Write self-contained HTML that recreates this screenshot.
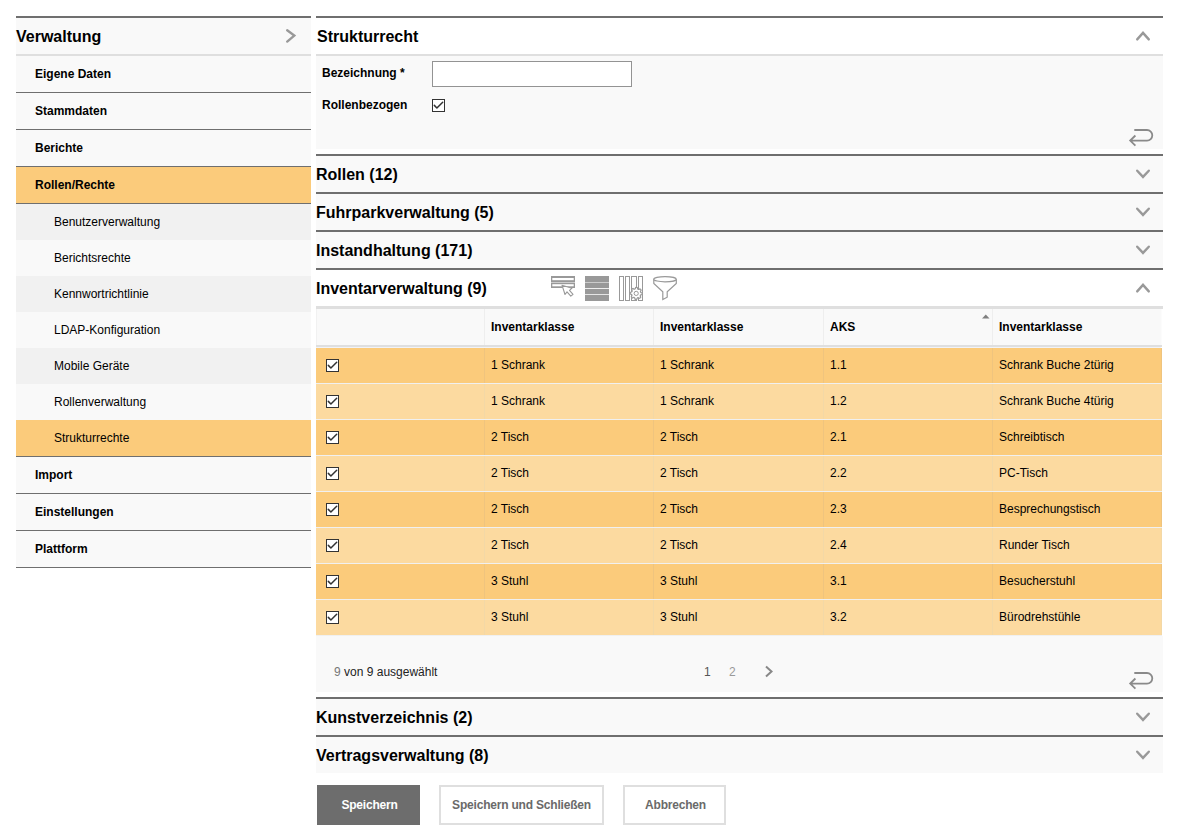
<!DOCTYPE html>
<html><head><meta charset="utf-8">
<style>
*{box-sizing:border-box;margin:0;padding:0}
html,body{width:1184px;height:839px;overflow:hidden;background:#fff;font-family:"Liberation Sans",sans-serif;color:#000}
.abs{position:absolute}
/* sidebar */
#sb{position:absolute;left:16px;top:16px;width:295px}
.sbh{height:38px;border-top:2px solid #6f6f6f;background:#f9f9f9;font-weight:bold;font-size:16px;line-height:36px;padding-top:1px;position:relative}
.sbl{height:2px;background:#dfdfdf}
.it{height:37px;background:#f9f9f9;border-bottom:1px solid #6f6f6f;font-weight:bold;font-size:12px;line-height:36px;padding-left:19px}
.it.sel{background:#fbcb7b}
.sub{height:36px;font-size:12px;line-height:36px;padding-left:38px;background:#f9f9f9}
.sub.g{background:#f1f1f1}
.sub.sel{background:#fbcb7b;border-bottom:1px solid #6f6f6f;height:37px}
/* main */
#mn{position:absolute;left:316px;top:16px;width:847px}
.ph{height:38px;border-top:2px solid #6f6f6f;background:#f9f9f9;font-weight:bold;font-size:16px;line-height:36px;padding-top:1px;position:relative}
.ph.open{background:#fff}
.chev{position:absolute;right:12px;top:0}
.lbl{position:absolute;font-weight:bold;font-size:12px}
.tr{display:flex;height:36px;border-bottom:1px solid #f0f0f0;font-size:12px}
.tr.th{height:38px;font-weight:bold;background:#f9f9f9;border-bottom:2px solid #dfdfdf}
.thsep{height:1px;background:#f1f3f8;width:845px}
.td{position:relative;line-height:35px;padding-left:6px;border-left:1px solid #eee}
.th .td{padding-top:1px}
.o1{background:#fbcb7b}.o2{background:#fcdaa0}
.o1 .td{border-left-color:#efc47e}.o2 .td{border-left-color:#f3d8a6}
.o1 .c4{border-right:1px solid #efc47e}.o2 .c4{border-right:1px solid #f3d8a6}
.th .c0{border-left:1px solid #f1f1f1}.th .c4{border-right:1px solid #fcfcfc}
.c0{width:168px;border-left:none}.c1{width:169px}.c2{width:170px}.c3{width:169px}.c4{width:170px}
.cb{position:absolute;left:10px;top:11px;line-height:0}
.btn{height:40px;border:2px solid #dfdfdf;background:#fff;color:#6a6a6a;font-weight:bold;font-size:12px;line-height:36px;text-align:center;letter-spacing:-0.2px}

</style></head><body>

<div id="sb">
  <div class="sbh">Verwaltung
    <svg class="abs" style="left:269px;top:10px" width="14" height="16" viewBox="0 0 14 16"><polyline points="2.2,2.2 9.3,7.6 2.2,13.6" fill="none" stroke="#999" stroke-width="2.4" stroke-linecap="round" stroke-linejoin="miter"/></svg>
  </div>
  <div class="sbl"></div>
  <div class="it">Eigene Daten</div>
  <div class="it">Stammdaten</div>
  <div class="it">Berichte</div>
  <div class="it sel">Rollen/Rechte</div>
  <div class="sub g">Benutzerverwaltung</div>
  <div class="sub">Berichtsrechte</div>
  <div class="sub g">Kennwortrichtlinie</div>
  <div class="sub">LDAP-Konfiguration</div>
  <div class="sub g">Mobile Geräte</div>
  <div class="sub">Rollenverwaltung</div>
  <div class="sub sel">Strukturrechte</div>
  <div class="it">Import</div>
  <div class="it">Einstellungen</div>
  <div class="it">Plattform</div>
</div>

<div id="mn">
  <!-- Strukturrecht -->
  <div class="ph open" style="padding-left:1px">Strukturrecht
    <svg class="abs" style="left:819px;top:12px" width="16" height="12" viewBox="0 0 16 12"><polyline points="2.2,9.4 8,2.9 13.8,9.4" fill="none" stroke="#999" stroke-width="2.4" stroke-linecap="round"/></svg>
  </div>
  <div style="height:2px;background:#dfdfdf"></div>
  <div style="height:93px;background:#f9f9f9;position:relative">
    <div class="lbl" style="left:6px;top:9px;line-height:16px">Bezeichnung *</div>
    <div class="abs" style="left:116px;top:5px;width:200px;height:26px;border:1px solid #939393;background:#fff"></div>
    <div class="lbl" style="left:6px;top:41px;line-height:16px">Rollenbezogen</div>
    <svg class="abs" style="left:116px;top:43px" width="13" height="13" viewBox="0 0 13 13"><rect x="0.5" y="0.5" width="12" height="12" fill="#fff" stroke="#333"/><polyline points="2.3,6.4 4.9,9 10.7,3.2" fill="none" stroke="#333" stroke-width="1.5" stroke-linecap="round" stroke-linejoin="round"/></svg>
    <svg class="abs" style="left:810px;top:70px" width="28" height="22" viewBox="0 0 28 22"><path d="M8.3,4 H21 A5.3,5.3 0 0 1 21,14.6 H4.2 M9.4,9.5 L4.2,14.6 L9.4,19.6" fill="none" stroke="#8a8a8a" stroke-width="1.8"/></svg>
  </div>
  <div style="height:5px;background:#fff"></div>

  <div class="ph">Rollen (12)
    <svg class="abs" style="left:819px;top:12px" width="16" height="12" viewBox="0 0 16 12"><polyline points="2.2,2.7 8,8.9 13.8,2.7" fill="none" stroke="#999" stroke-width="2.4" stroke-linecap="round"/></svg>
  </div>
  <div class="ph">Fuhrparkverwaltung (5)
    <svg class="abs" style="left:819px;top:12px" width="16" height="12" viewBox="0 0 16 12"><polyline points="2.2,2.7 8,8.9 13.8,2.7" fill="none" stroke="#999" stroke-width="2.4" stroke-linecap="round"/></svg>
  </div>
  <div class="ph">Instandhaltung (171)
    <svg class="abs" style="left:819px;top:12px" width="16" height="12" viewBox="0 0 16 12"><polyline points="2.2,2.7 8,8.9 13.8,2.7" fill="none" stroke="#999" stroke-width="2.4" stroke-linecap="round"/></svg>
  </div>
  <div class="ph open">Inventarverwaltung (9)
<svg class="abs" style="left:234px;top:5px" width="26" height="24" viewBox="0 0 26 24"><rect x="1" y="1" width="24" height="6" fill="#999"/><rect x="2.3" y="3" width="21.4" height="2.2" fill="#fff"/><rect x="1" y="7" width="24" height="1" fill="#ccc"/><rect x="1" y="8" width="24" height="5" fill="#999"/><rect x="2.3" y="9.2" width="21.4" height="2.1" fill="#fff"/><polygon points="12,10.2 15,19.5 17,16.8 20.8,21.2 23,19.3 19.5,15.3 22,13.2" fill="#fff" stroke="#999" stroke-width="1.1" stroke-linejoin="round"/></svg>
<svg class="abs" style="left:269px;top:6px" width="24" height="25" viewBox="0 0 24 25"><rect x="0" y="0" width="24" height="6" fill="#999"/><rect x="0" y="6" width="24" height="1" fill="#ccc"/><rect x="0" y="7" width="24" height="5" fill="#999"/><rect x="0" y="12" width="24" height="1" fill="#eee"/><rect x="0" y="13" width="24" height="5" fill="#999"/><rect x="0" y="18" width="24" height="1" fill="#e5e5e5"/><rect x="0" y="19" width="24" height="6" fill="#999"/></svg>
<svg class="abs" style="left:302px;top:5px" width="26" height="27" viewBox="0 0 26 27"><g fill="none" stroke="#999" stroke-width="1"><rect x="1.5" y="1.5" width="4" height="24"/><rect x="7.5" y="1.5" width="4" height="24"/><rect x="13.5" y="1.5" width="5" height="24"/><rect x="20.5" y="1.5" width="4" height="24"/></g><polygon points="18.20,12.40 18.79,12.43 19.35,12.61 19.62,13.71 19.96,14.15 20.37,14.34 20.92,14.33 21.94,13.84 22.44,14.16 22.84,14.59 23.11,15.12 22.52,16.09 22.45,16.64 22.60,17.06 23.01,17.44 24.07,17.82 24.20,18.40 24.17,18.99 23.99,19.55 22.89,19.82 22.45,20.16 22.26,20.57 22.27,21.12 22.76,22.14 22.44,22.64 22.01,23.04 21.48,23.31 20.51,22.72 19.96,22.65 19.54,22.80 19.16,23.21 18.78,24.27 18.20,24.40 17.61,24.37 17.05,24.19 16.78,23.09 16.44,22.65 16.03,22.46 15.48,22.47 14.46,22.96 13.96,22.64 13.56,22.21 13.29,21.68 13.88,20.71 13.95,20.16 13.80,19.74 13.39,19.36 12.33,18.98 12.20,18.40 12.23,17.81 12.41,17.25 13.51,16.98 13.95,16.64 14.14,16.23 14.13,15.68 13.64,14.66 13.96,14.16 14.39,13.76 14.92,13.49 15.89,14.08 16.44,14.15 16.86,14.00 17.24,13.59 17.62,12.53" fill="#fff" stroke="#999" stroke-width="1.2"/><circle cx="18.2" cy="18.4" r="2.1" fill="#fff" stroke="#999" stroke-width="1"/></svg>
<svg class="abs" style="left:336px;top:5px" width="26" height="27" viewBox="0 0 26 27"><g fill="#fff" stroke="#999" stroke-width="1.2"><path d="M1.8,4.2 V8.4 L10.8,16.8 V24.5 L15.2,22.2 V16.8 L24.3,8.4 V4.2"/><ellipse cx="13" cy="4.2" rx="11.3" ry="2.6"/></g></svg>
    <svg class="abs" style="left:819px;top:12px" width="16" height="12" viewBox="0 0 16 12"><polyline points="2.2,9.4 8,2.9 13.8,9.4" fill="none" stroke="#999" stroke-width="2.4" stroke-linecap="round"/></svg>
  </div>
  <div style="height:3px;background:#dfdfdf"></div>
<div id="tbl" style="position:relative;width:846px;background:#fff">
<div class="tr th">
<div class="td c0"></div><div class="td c1">Inventarklasse</div><div class="td c2">Inventarklasse</div><div class="td c3">AKS<svg class="abs" style="left:158px;top:5px" width="8" height="5" viewBox="0 0 8 5"><polygon points="0,4.5 7.5,4.5 3.75,0.5" fill="#808080"/></svg></div><div class="td c4">Inventarklasse</div>
</div>
<div class="thsep"></div>
<div class="tr o1"><div class="td c0"><span class="cb"><svg width="13" height="13" viewBox="0 0 13 13"><rect x="0.5" y="0.5" width="12" height="12" fill="#fff" stroke="#333"/><polyline points="2.3,6.4 4.9,9 10.7,3.2" fill="none" stroke="#333" stroke-width="1.5" stroke-linecap="round" stroke-linejoin="round"/></svg></span></div><div class="td c1">1 Schrank</div><div class="td c2">1 Schrank</div><div class="td c3">1.1</div><div class="td c4">Schrank Buche 2türig</div></div>
<div class="tr o2"><div class="td c0"><span class="cb"><svg width="13" height="13" viewBox="0 0 13 13"><rect x="0.5" y="0.5" width="12" height="12" fill="#fff" stroke="#333"/><polyline points="2.3,6.4 4.9,9 10.7,3.2" fill="none" stroke="#333" stroke-width="1.5" stroke-linecap="round" stroke-linejoin="round"/></svg></span></div><div class="td c1">1 Schrank</div><div class="td c2">1 Schrank</div><div class="td c3">1.2</div><div class="td c4">Schrank Buche 4türig</div></div>
<div class="tr o1"><div class="td c0"><span class="cb"><svg width="13" height="13" viewBox="0 0 13 13"><rect x="0.5" y="0.5" width="12" height="12" fill="#fff" stroke="#333"/><polyline points="2.3,6.4 4.9,9 10.7,3.2" fill="none" stroke="#333" stroke-width="1.5" stroke-linecap="round" stroke-linejoin="round"/></svg></span></div><div class="td c1">2 Tisch</div><div class="td c2">2 Tisch</div><div class="td c3">2.1</div><div class="td c4">Schreibtisch</div></div>
<div class="tr o2"><div class="td c0"><span class="cb"><svg width="13" height="13" viewBox="0 0 13 13"><rect x="0.5" y="0.5" width="12" height="12" fill="#fff" stroke="#333"/><polyline points="2.3,6.4 4.9,9 10.7,3.2" fill="none" stroke="#333" stroke-width="1.5" stroke-linecap="round" stroke-linejoin="round"/></svg></span></div><div class="td c1">2 Tisch</div><div class="td c2">2 Tisch</div><div class="td c3">2.2</div><div class="td c4">PC-Tisch</div></div>
<div class="tr o1"><div class="td c0"><span class="cb"><svg width="13" height="13" viewBox="0 0 13 13"><rect x="0.5" y="0.5" width="12" height="12" fill="#fff" stroke="#333"/><polyline points="2.3,6.4 4.9,9 10.7,3.2" fill="none" stroke="#333" stroke-width="1.5" stroke-linecap="round" stroke-linejoin="round"/></svg></span></div><div class="td c1">2 Tisch</div><div class="td c2">2 Tisch</div><div class="td c3">2.3</div><div class="td c4">Besprechungstisch</div></div>
<div class="tr o2"><div class="td c0"><span class="cb"><svg width="13" height="13" viewBox="0 0 13 13"><rect x="0.5" y="0.5" width="12" height="12" fill="#fff" stroke="#333"/><polyline points="2.3,6.4 4.9,9 10.7,3.2" fill="none" stroke="#333" stroke-width="1.5" stroke-linecap="round" stroke-linejoin="round"/></svg></span></div><div class="td c1">2 Tisch</div><div class="td c2">2 Tisch</div><div class="td c3">2.4</div><div class="td c4">Runder Tisch</div></div>
<div class="tr o1"><div class="td c0"><span class="cb"><svg width="13" height="13" viewBox="0 0 13 13"><rect x="0.5" y="0.5" width="12" height="12" fill="#fff" stroke="#333"/><polyline points="2.3,6.4 4.9,9 10.7,3.2" fill="none" stroke="#333" stroke-width="1.5" stroke-linecap="round" stroke-linejoin="round"/></svg></span></div><div class="td c1">3 Stuhl</div><div class="td c2">3 Stuhl</div><div class="td c3">3.1</div><div class="td c4">Besucherstuhl</div></div>
<div class="tr o2"><div class="td c0"><span class="cb"><svg width="13" height="13" viewBox="0 0 13 13"><rect x="0.5" y="0.5" width="12" height="12" fill="#fff" stroke="#333"/><polyline points="2.3,6.4 4.9,9 10.7,3.2" fill="none" stroke="#333" stroke-width="1.5" stroke-linecap="round" stroke-linejoin="round"/></svg></span></div><div class="td c1">3 Stuhl</div><div class="td c2">3 Stuhl</div><div class="td c3">3.2</div><div class="td c4">Bürodrehstühle</div></div>
</div>
<div style="height:56px;background:#f9f9f9;position:relative;width:847px">
<div class="abs" style="left:18px;top:28px;font-size:12px;line-height:16px;color:#222"><span style="color:#777">9</span> von 9 ausgewählt</div>
<div class="abs" style="left:388px;top:28px;font-size:12px;line-height:16px;color:#555">1</div>
<div class="abs" style="left:413px;top:28px;font-size:12px;line-height:16px;color:#999">2</div>
<svg class="abs" style="left:448px;top:29px" width="10" height="14" viewBox="0 0 10 14"><polyline points="2,1.5 7.5,6.5 2,11.5" fill="none" stroke="#888" stroke-width="2"/></svg>
<svg class="abs" style="left:810px;top:33px" width="28" height="22" viewBox="0 0 28 22"><path d="M8.3,4 H21 A5.3,5.3 0 0 1 21,14.6 H4.2 M9.4,9.5 L4.2,14.6 L9.4,19.6" fill="none" stroke="#8a8a8a" stroke-width="1.8"/></svg>
</div>
<div style="height:5px;background:#fff"></div>
<div class="ph">Kunstverzeichnis (2)<svg class="abs" style="left:819px;top:12px" width="16" height="12" viewBox="0 0 16 12"><polyline points="2.2,2.7 8,8.9 13.8,2.7" fill="none" stroke="#999" stroke-width="2.4" stroke-linecap="round"/></svg></div>
<div class="ph">Vertragsverwaltung (8)<svg class="abs" style="left:819px;top:12px" width="16" height="12" viewBox="0 0 16 12"><polyline points="2.2,2.7 8,8.9 13.8,2.7" fill="none" stroke="#999" stroke-width="2.4" stroke-linecap="round"/></svg></div>
</div>
<div class="abs btn" style="left:317px;top:785px;width:103px;background:#6d6d6d;color:#fff;border:none;line-height:40px;padding-left:2px">Speichern</div>
<div class="abs btn" style="left:439px;top:785px;width:165px">Speichern und Schließen</div>
<div class="abs btn" style="left:623px;top:785px;width:103px;padding-left:2px">Abbrechen</div>

</body></html>
